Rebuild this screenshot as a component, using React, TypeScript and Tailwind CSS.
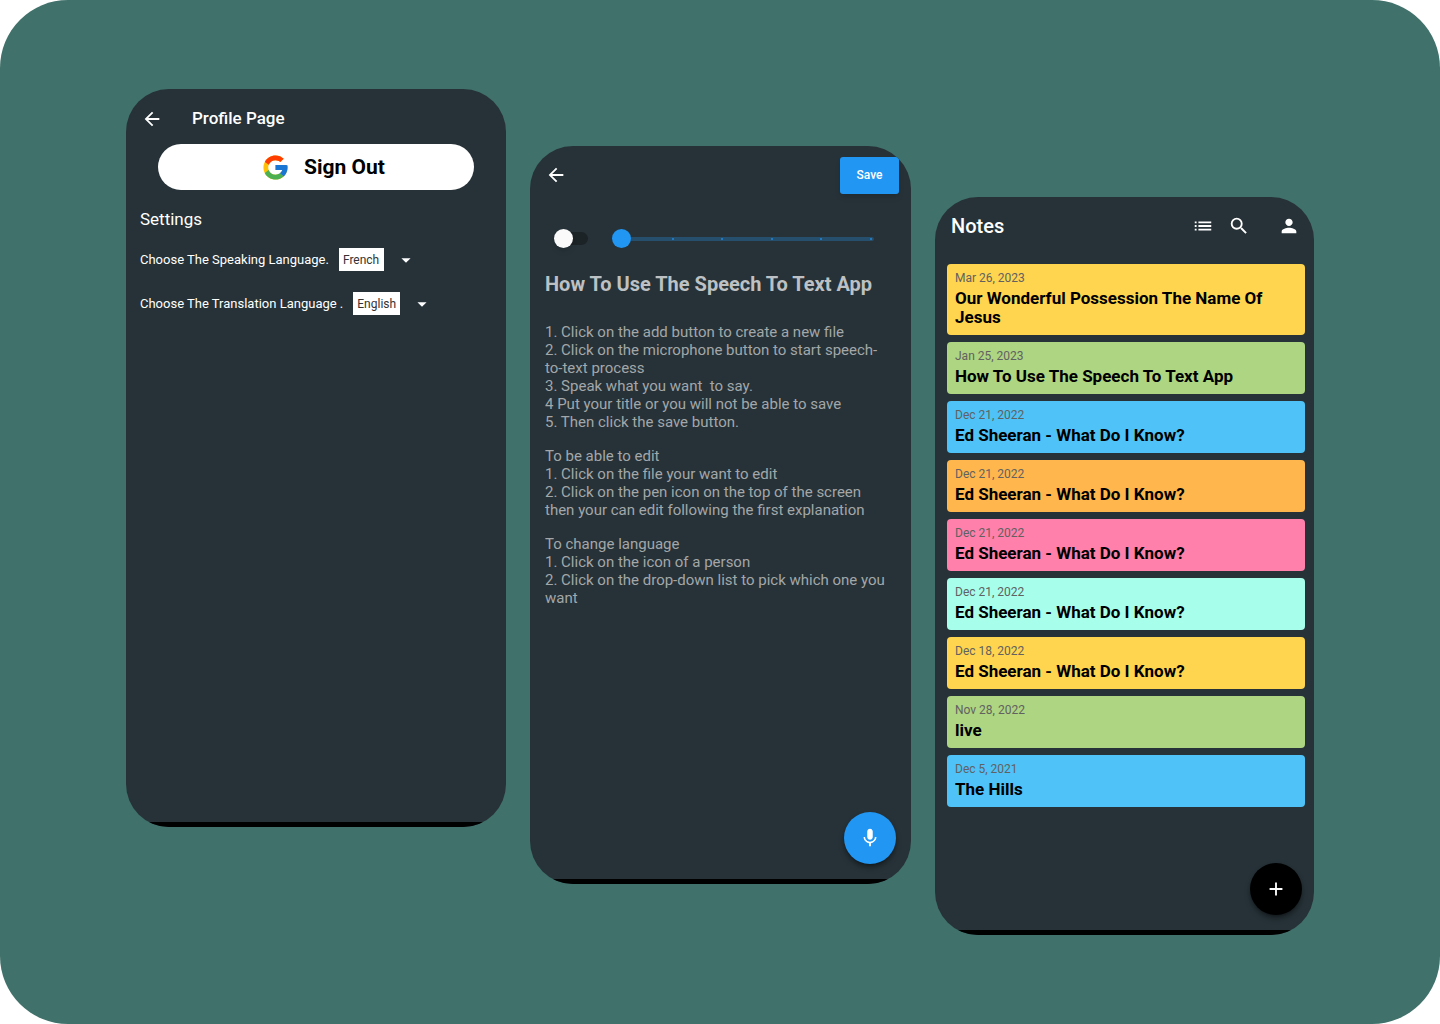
import { useState, type ReactNode } from "react";
import {
  MdAdd,
  MdArrowBack,
  MdArrowDropDown,
  MdList,
  MdMic,
  MdPerson,
  MdSearch,
} from "react-icons/md";
import { FcGoogle } from "react-icons/fc";

function Phone({ label, className, children }: { label: string; className: string; children: ReactNode }) {
  return (
    <section
      aria-label={label}
      className={`flex min-h-[738px] flex-1 flex-col overflow-hidden rounded-[43px] bg-[#263238] ${className}`}
    >
      <div className="flex flex-1 flex-col">{children}</div>
      <div className="h-[5px] bg-black" />
    </section>
  );
}

function LanguageSelect({ id, label, options }: { id: string; label: string; options: string[] }) {
  return (
    <div className="flex h-[23px] items-center text-[13px]">
      <label htmlFor={id}>{label}</label>
      <select
        id={id}
        className="ml-[10px] h-[23px] appearance-none bg-white px-1 text-xs text-[#333333] outline-none"
      >
        {options.map((option) => (
          <option key={option}>{option}</option>
        ))}
      </select>
      <MdArrowDropDown aria-hidden size={22} className="ml-[11px]" />
    </div>
  );
}

function ProfileScreen() {
  return (
    <Phone label="Profile" className="max-w-[380px]">
      <header className="flex h-[55px] items-center pt-1 pl-[15px]">
        <button type="button" aria-label="Back">
          <MdArrowBack size={22} />
        </button>
        <h1 className="ml-[29px] text-[17px] font-medium">Profile Page</h1>
      </header>
      <button
        type="button"
        className="mx-8 flex h-[46px] items-center justify-center gap-[14px] rounded-full bg-white pl-[14px] text-[21px] leading-7 font-bold text-black"
      >
        <FcGoogle size={29} />
        Sign Out
      </button>
      <div className="flex flex-col px-[14px] pt-[18px]">
        <h2 className="text-[17px] leading-[22px]">Settings</h2>
        <div className="mt-[18px] flex flex-col gap-[21px]">
          <LanguageSelect id="speaking" label="Choose The Speaking Language." options={["French"]} />
          <LanguageSelect id="translation" label="Choose The Translation Language ." options={["English"]} />
        </div>
      </div>
    </Phone>
  );
}

const instructions = [
  [
    "1. Click on the add button to create a new file",
    "2. Click on the microphone button to start speech-to-text process",
    "3. Speak what you want  to say.",
    "4 Put your title or you will not be able to save",
    "5. Then click the save button.",
  ],
  [
    "To be able to edit",
    "1. Click on the file your want to edit",
    "2. Click on the pen icon on the top of the screen then your can edit following the first explanation",
  ],
  [
    "To change language",
    "1. Click on the icon of a person",
    "2. Click on the drop-down list to pick which one you want",
  ],
];

function EditorScreen() {
  const [enabled, setEnabled] = useState(false);
  const [step, setStep] = useState(0);
  return (
    <Phone label="Editor" className="mt-[57px] max-w-[381px]">
      <header className="flex h-[55px] items-center justify-between pt-[3px] pr-3 pl-[15px]">
        <button type="button" aria-label="Back">
          <MdArrowBack size={22} />
        </button>
        <button
          type="button"
          className="h-[37px] w-[59px] rounded-[3px] bg-[#2196f3] text-xs font-medium shadow-md"
        >
          Save
        </button>
      </header>
      <div className="mt-7 flex items-center pr-[37px] pl-6">
        <label className="relative flex h-[19px] w-[34px] items-center">
          <input
            type="checkbox"
            role="switch"
            aria-label="Continuous listening"
            checked={enabled}
            onChange={(event) => setEnabled(event.target.checked)}
            className="peer h-[13px] w-[34px] appearance-none rounded-full bg-[#1c2327]"
          />
          <span className="absolute left-0 size-[19px] rounded-full bg-[#fafafa] shadow-md peer-checked:left-[15px]" />
        </label>
        <div className="relative ml-6 flex h-[19px] flex-1 items-center">
          <div className="absolute right-0 left-2 flex h-1 items-center justify-between rounded-full bg-[#264f6e] px-[2px]">
            {[0, 1, 2, 3, 4, 5].map((tick) => (
              <span key={tick} className="size-[2px] rounded-full bg-[#2189dc]" />
            ))}
          </div>
          <input
            type="range"
            aria-label="Speed"
            min={0}
            max={5}
            value={step}
            onChange={(event) => setStep(Number(event.target.value))}
            className="relative h-[19px] w-full appearance-none bg-transparent [&::-webkit-slider-thumb]:size-[19px] [&::-webkit-slider-thumb]:appearance-none [&::-webkit-slider-thumb]:rounded-full [&::-webkit-slider-thumb]:bg-[#2196f3]"
          />
        </div>
      </div>
      <article className="pt-[22px] pr-[26px] pl-[15px]">
        <h1 className="text-xl font-bold text-[#bec1c3]">How To Use The Speech To Text App</h1>
        <div className="mt-[25px] flex flex-col gap-4 text-[15px] leading-[18px] whitespace-pre-wrap text-[#a3a7a9]">
          {instructions.map((group) => (
            <div key={group[0]}>
              {group.map((line) => (
                <p key={line}>{line}</p>
              ))}
            </div>
          ))}
        </div>
      </article>
      <button
        type="button"
        aria-label="Record"
        className="mt-auto mr-[15px] mb-[15px] flex size-[52px] items-center justify-center self-end rounded-full bg-[#2196f3] shadow-md shadow-black/40"
      >
        <MdMic size={22} />
      </button>
    </Phone>
  );
}

const notes = [
  { date: "Mar 26, 2023", title: "Our Wonderful Possession The Name Of Jesus", color: "bg-[#ffd54f]" },
  { date: "Jan 25, 2023", title: "How To Use The Speech To Text App", color: "bg-[#aed581]" },
  { date: "Dec 21, 2022", title: "Ed Sheeran - What Do I Know?", color: "bg-[#4fc3f7]" },
  { date: "Dec 21, 2022", title: "Ed Sheeran - What Do I Know?", color: "bg-[#ffb74d]" },
  { date: "Dec 21, 2022", title: "Ed Sheeran - What Do I Know?", color: "bg-[#ff80ab]" },
  { date: "Dec 21, 2022", title: "Ed Sheeran - What Do I Know?", color: "bg-[#a7ffeb]" },
  { date: "Dec 18, 2022", title: "Ed Sheeran - What Do I Know?", color: "bg-[#ffd54f]" },
  { date: "Nov 28, 2022", title: "live", color: "bg-[#aed581]" },
  { date: "Dec 5, 2021", title: "The Hills", color: "bg-[#4fc3f7]" },
];

function NotesScreen() {
  return (
    <Phone label="Notes" className="mt-[108px] max-w-[379px]">
      <header className="flex h-[55px] items-center pt-[3px] pr-[14px] pl-4">
        <h1 className="mr-auto text-xl font-medium">Notes</h1>
        <button type="button" aria-label="List view">
          <MdList size={22} />
        </button>
        <button type="button" aria-label="Search" className="ml-[14px]">
          <MdSearch size={22} />
        </button>
        <button type="button" aria-label="Profile" className="ml-7">
          <MdPerson size={22} />
        </button>
      </header>
      <ul className="mt-3 flex flex-col gap-[7px] pr-[9px] pl-3">
        {notes.map((note, index) => (
          <li key={index} className={`rounded-[4px] px-2 pt-[7px] pb-2 ${note.color}`}>
            <p className="text-xs leading-[14px] text-[#616161]">{note.date}</p>
            <h2 className="mt-1 text-[17px] leading-[19px] font-bold text-black">{note.title}</h2>
          </li>
        ))}
      </ul>
      <button
        type="button"
        aria-label="Add note"
        className="mt-auto mr-3 mb-[15px] flex size-[52px] items-center justify-center self-end rounded-full bg-black shadow-md shadow-black/40"
      >
        <MdAdd size={22} />
      </button>
    </Phone>
  );
}

export default function App() {
  return (
    <div className="bg-white font-['Roboto',sans-serif] text-white">
      <main className="flex min-h-screen items-start justify-center gap-6 rounded-[68px] bg-[#40716a] px-8 py-[89px]">
        <ProfileScreen />
        <EditorScreen />
        <NotesScreen />
      </main>
    </div>
  );
}
